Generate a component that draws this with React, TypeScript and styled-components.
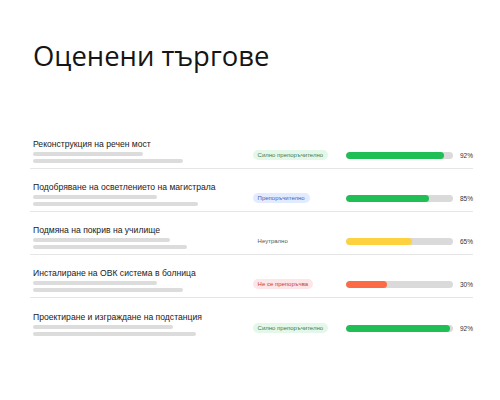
import React from "react";
import styled, { createGlobalStyle } from "styled-components";

const Global = createGlobalStyle`
  html, body { margin: 0; padding: 0; background: #ffffff; }
  body { width: 500px; height: 400px; overflow: hidden; }
`;

const Page = styled.div`
  width: 500px;
  height: 400px;
  box-sizing: border-box;
  padding: 36px 27px 0 30px;
  font-family: "Liberation Sans", Inter, sans-serif;
  color: #1a1a1a;
`;

const Title = styled.h1`
  margin: 0 0 0 3px;
  font-family: "Open Sans", "Noto Sans", sans-serif;
  font-weight: 400;
  font-size: 27.4px;
  line-height: 40px;
  color: #151515;
`;

const List = styled.div`
  margin-top: 50px;
  display: flex;
  flex-direction: column;
`;

const Row = styled.div<{ $last?: boolean }>`
  display: flex;
  align-items: flex-end;
  height: 43px;
  box-sizing: border-box;
  border-bottom: ${(p) => (p.$last ? "none" : "1.5px solid #e6e6e6")};
  padding: 0 0 5px 3px;
`;

const Info = styled.div`
  width: 221px;
  display: flex;
  flex-direction: column;
  gap: 3px;
`;

const Name = styled.div`
  font-size: 8.6px;
  line-height: 11px;
  color: #1a1a1a;
  white-space: nowrap;
  margin-bottom: -1px;
`;

const Skeleton = styled.div<{ $w: number }>`
  width: ${(p) => p.$w}px;
  height: 4px;
  border-radius: 2px;
  background: #dcdcdc;
`;

const BadgeCell = styled.div`
  width: 94px;
  height: 10px;
  display: flex;
  align-items: center;
  margin-bottom: 3px;
`;

type Tone = "green" | "blue" | "neutral" | "red";

const toneBg: Record<Tone, string> = {
  green: "#e4f8ea",
  blue: "#e3ebff",
  neutral: "transparent",
  red: "#fde6e8",
};
const toneFg: Record<Tone, string> = {
  green: "#3c7a52",
  blue: "#3f5fb8",
  neutral: "#555555",
  red: "#c4413f",
};

const Badge = styled.span<{ $tone: Tone }>`
  display: inline-block;
  font-size: 6px;
  line-height: 10px;
  height: 10px;
  padding: 0 5px;
  border-radius: 5px;
  white-space: nowrap;
  background: ${(p) => toneBg[p.$tone]};
  color: ${(p) => toneFg[p.$tone]};
`;

const BarCell = styled.div`
  display: flex;
  align-items: center;
  gap: 7px;
  height: 10px;
  margin-bottom: 3px;
`;

const Track = styled.div`
  width: 107px;
  height: 7px;
  border-radius: 3.5px;
  background: #dadada;
  overflow: hidden;
  display: flex;
`;

const barColor: Record<Tone, string> = {
  green: "#20bf55",
  blue: "#20bf55",
  neutral: "#fdd23e",
  red: "#fd6a46",
};

const Fill = styled.div<{ $tone: Tone }>`
  height: 100%;
  border-radius: 3.5px;
  background: ${(p) => barColor[p.$tone]};
`;

const Pct = styled.span`
  font-size: 6.5px;
  color: #333333;
`;

const rows: {
  name: string;
  w1: number;
  w2: number;
  badge: string;
  tone: Tone;
  pct: string;
  fill: number;
}[] = [
  { name: "Реконструкция на речен мост", w1: 110, w2: 150, badge: "Силно препоръчително", tone: "green", pct: "92%", fill: 91.5 },
  { name: "Подобряване на осветлението на магистрала", w1: 124, w2: 165, badge: "Препоръчително", tone: "blue", pct: "85%", fill: 78 },
  { name: "Подмяна на покрив на училище", w1: 137, w2: 154, badge: "Неутрално", tone: "neutral", pct: "65%", fill: 62 },
  { name: "Инсталиране на ОВК система в болница", w1: 124, w2: 150, badge: "Не се препоръчва", tone: "red", pct: "30%", fill: 38 },
  { name: "Проектиране и изграждане на подстанция", w1: 140, w2: 163, badge: "Силно препоръчително", tone: "green", pct: "92%", fill: 97 },
];

export default function App() {
  return (
    <>
      <Global />
      <Page>
        <Title>Оценени търгове</Title>
        <List>
          {rows.map((r, i) => (
            <Row key={i} $last={i === rows.length - 1}>
              <Info>
                <Name>{r.name}</Name>
                <Skeleton $w={r.w1} />
                <Skeleton $w={r.w2} />
              </Info>
              <BadgeCell>
                <Badge $tone={r.tone}>{r.badge}</Badge>
              </BadgeCell>
              <BarCell>
                <Track>
                  <Fill $tone={r.tone} style={{ width: `${r.fill}%` }} />
                </Track>
                <Pct>{r.pct}</Pct>
              </BarCell>
            </Row>
          ))}
        </List>
      </Page>
    </>
  );
}
